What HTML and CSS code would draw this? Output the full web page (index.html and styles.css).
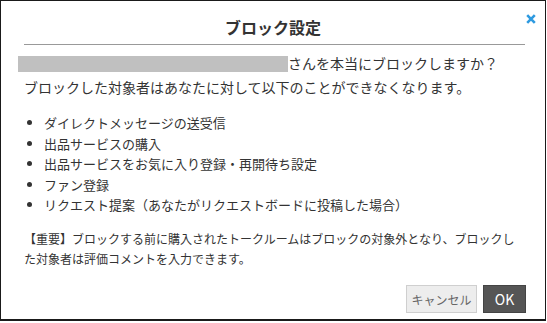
FILE: index.html
```html
<!DOCTYPE html>
<html lang="ja">
<head>
<meta charset="utf-8">
<link rel="stylesheet" href="styles.css">
</head>
<body>
<div class="dialog">
  <div class="header">
    <h1 class="title">ブロック設定</h1>
    <button class="close" aria-label="閉じる">
      <svg width="10" height="10" viewBox="0 0 10 10"><path d="M1.2 1.2 L8.8 8.8 M8.8 1.2 L1.2 8.8" stroke="#2e9ae0" stroke-width="2.6" stroke-linecap="butt"/></svg>
    </button>
  </div>
  <div class="rule"></div>
  <div class="body">
    <p class="lead"><span class="name"></span>さんを本当にブロックしますか？<br>ブロックした対象者はあなたに対して以下のことができなくなります。</p>
    <ul class="list">
      <li>ダイレクトメッセージの送受信</li>
      <li>出品サービスの購入</li>
      <li>出品サービスをお気に入り登録・再開待ち設定</li>
      <li>ファン登録</li>
      <li>リクエスト提案（あなたがリクエストボードに投稿した場合）</li>
    </ul>
    <p class="note">【重要】ブロックする前に購入されたトークルームはブロックの対象外となり、ブロックした対象者は評価コメントを入力できます。</p>
  </div>
  <div class="footer">
    <button class="btn btn-cancel">キャンセル</button>
    <button class="btn btn-ok">OK</button>
  </div>
</div>
</body>
</html>
```

FILE: styles.css
```css
* { box-sizing: border-box; }
html, body { margin: 0; padding: 0; background: #fff; }
body {
  font-family: "Noto Sans CJK JP", "Noto Sans", sans-serif;
  color: #333;
}
.dialog {
  width: 546px;
  height: 321px;
  border: 1px solid #1a1a1a;
  border-bottom-width: 2px;
  display: flex;
  flex-direction: column;
}
.header {
  position: relative;
  padding-top: 14px;
}
.title {
  margin: 0;
  text-align: center;
  font-size: 16px;
  line-height: 24px;
  font-weight: bold;
  color: #333;
}
.close {
  position: absolute;
  top: 12px;
  right: 8px;
  width: 12px;
  height: 12px;
  padding: 0;
  border: 0;
  background: none;
  display: flex;
  align-items: center;
  justify-content: center;
}
.rule {
  margin: 5px 20px 0 23px;
  height: 1px;
  background: #999;
}
.body {
  padding: 0 20px 0 23px;
  flex: 1;
}
.lead {
  margin: 6px 0 0;
  font-size: 14px;
  line-height: 24px;
  color: #333;
}
.name {
  display: inline-block;
  width: 270px;
  height: 16px;
  background: #c0c0c0;
  vertical-align: -3px;
  margin-left: -6px;
}
.list {
  margin: 14px 0 0;
  padding: 0 0 0 20px;
  font-size: 13px;
  line-height: 20.5px;
  color: #333;
}
.note {
  margin: 13px 0 0;
  font-size: 12px;
  line-height: 20px;
  color: #333;
}
.footer {
  display: flex;
  justify-content: flex-end;
  gap: 6px;
  padding: 0 19px 6px 0;
}
.btn {
  height: 28px;
  padding: 0;
  white-space: nowrap;
  font-family: "Noto Sans CJK JP", "Noto Sans", sans-serif;
  font-size: 12px;
  border-radius: 0;
  cursor: pointer;
}
.btn-cancel {
  width: 71px;
  background: #ededed;
  border: 1px solid #cfcfcf;
  color: #666;
}
.btn-ok {
  width: 43px;
  background: #555;
  border: 1px solid #444;
  color: #fff;
  font-size: 14px;
}
```
